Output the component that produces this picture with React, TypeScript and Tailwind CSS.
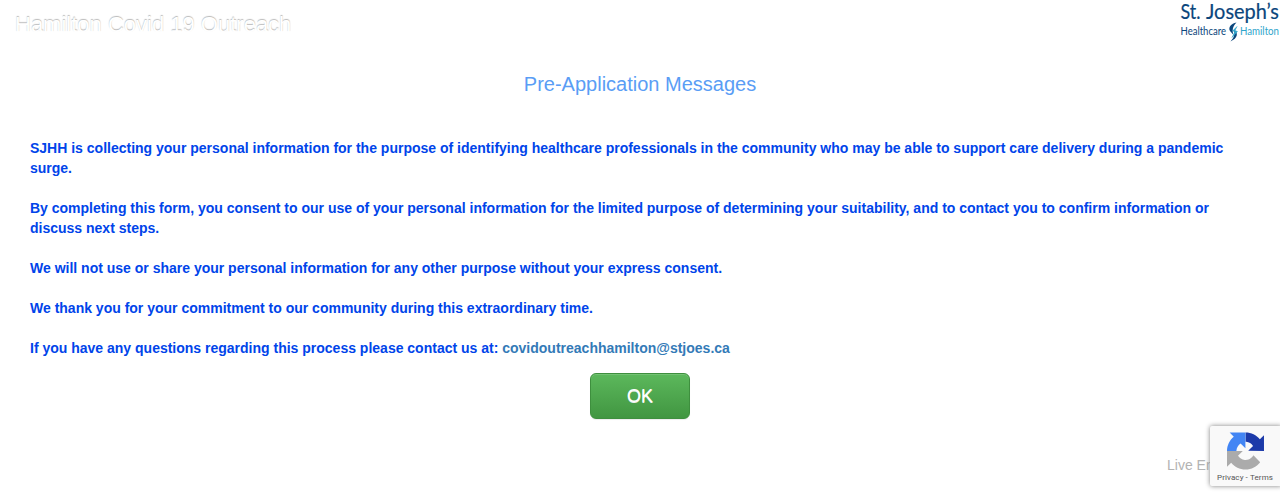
function HospitalLogo() {
  return (
    <svg width="100" height="44" viewBox="0 0 100 44" role="img" aria-label="St. Joseph's Healthcare Hamilton">
      <g fontFamily="Lato" strokeWidth="0.2">
        <text x="0.5" y="19" fontSize="22" textLength="20" lengthAdjust="spacingAndGlyphs" fill="#0b467c" stroke="#0b467c">
          St.
        </text>
        <text x="26" y="19" fontSize="22" textLength="73" lengthAdjust="spacingAndGlyphs" fill="#0b467c" stroke="#0b467c">
          Joseph’s
        </text>
        <text x="0.5" y="35" fontSize="11" textLength="45.5" lengthAdjust="spacingAndGlyphs" fill="#0b467c">
          Healthcare
        </text>
        <text x="60" y="35" fontSize="11" textLength="39" lengthAdjust="spacingAndGlyphs" fill="#2fa5cb">
          Hamilton
        </text>
      </g>
      <path d="M56.5 22.5C51 23.5 48 27.5 50 31L53.5 35C52 30.5 52.5 26.5 56.5 22.5Z" fill="#0b467c" />
      <path d="M54 29.5C58.5 33 58 38 50.5 41.5C54 37.5 55 35 54 29.5Z" fill="#0b467c" />
      <path d="M57 26.5L52.5 31L55 31.5L52 37.5L57.5 31.5L55 30.5Z" fill="#2fa5cb" stroke="#2fa5cb" strokeWidth="0.5" />
    </svg>
  );
}

function RecaptchaIcon() {
  return (
    <svg width="37" height="38" viewBox="0 0 64 64" aria-hidden="true">
      <path fill="#1c3aa9" d="M64 31.955l-.033-1.37V4.687l-7.16 7.16C50.948 4.674 42.033.093 32.05.093v15.9c.485 0 .86.057 1.135.163 4.976.393 9.288 3.14 11.828 7.124l-8.307 8.307L64 31.953" />
      <path fill="#4285f4" d="M31.862.094l-1.37.033H4.594l7.16 7.16C4.58 13.147 0 22.06 0 32.046h16.26c0-.485.057-.86.163-1.135.393-4.976 3.14-9.288 7.124-11.828l8.307 8.307L31.86.095" />
      <path fill="#ababab" d="M.001 32.045l.033 1.37v25.898l7.16-7.16c5.86 7.173 14.774 11.754 24.76 11.754 10.4 0 19.622-4.96 25.458-12.64l-11.736-11.86a15.55 15.55 0 0 1-4.754 5.334c-2.05 1.6-4.952 2.906-8.968 2.906-.485 0-.86-.057-1.135-.163-4.976-.393-9.288-3.14-11.828-7.124l8.307-8.307c-10.522.04-22.4.066-27.295-.005" />
    </svg>
  );
}

export default function App() {
  return (
    <div className="relative h-[500px] overflow-hidden bg-white font-['Liberation_Sans',Arial,sans-serif] text-sm leading-5">
      <header className="flex h-[50px] items-start justify-between pl-[15px]">
        <h1 className="pt-[9px] text-[22px] leading-8 text-white [text-shadow:0_-1px_1px_rgba(0,0,0,0.28)]">
          Hamilton Covid 19 Outreach
        </h1>
        <HospitalLogo />
      </header>
      <main className="px-[30px]">
        <h2 className="pt-[22px] text-center text-xl leading-6 text-[#5a9df5]">Pre-Application Messages</h2>
        <div className="space-y-5 pt-[42px] font-bold text-[#0044ea]">
          <p>
            SJHH is collecting your personal information for the purpose of identifying healthcare professionals in the
            community who may be able to support care delivery during a pandemic surge.
          </p>
          <p>
            By completing this form, you consent to our use of your personal information for the limited purpose of
            determining your suitability, and to contact you to confirm information or discuss next steps.
          </p>
          <p>We will not use or share your personal information for any other purpose without your express consent.</p>
          <p>We thank you for your commitment to our community during this extraordinary time.</p>
          <p>
            If you have any questions regarding this process please contact us at:{" "}
            <a href="mailto:covidoutreachhamilton@stjoes.ca" className="text-[#337ab7]">
              covidoutreachhamilton@stjoes.ca
            </a>
          </p>
        </div>
        <div className="flex justify-center pt-[15px]">
          <button
            type="button"
            className="h-[46px] w-[100px] rounded-md border border-[#3e8f3e] bg-linear-to-b from-[#5cb85c] to-[#419641] text-lg leading-6 text-white shadow-[inset_0_1px_0_rgba(255,255,255,0.15),0_1px_1px_rgba(0,0,0,0.075)] [text-shadow:0_1px_0_#eee]"
          >
            OK
          </button>
        </div>
      </main>
      <footer className="mt-9 flex justify-end pr-[15px] whitespace-nowrap text-[#b3b3b3]">
        <span className="w-[98px]">Live Environment</span>
      </footer>
      <aside className="absolute right-[-2px] bottom-[14px] flex h-[60px] w-[72px] flex-col items-center rounded-[2px] bg-[#f9f9f9] pt-[6px] pr-[2px] shadow-[0_0_5px_gray]">
        <RecaptchaIcon />
        <span className="mt-[3px] [font-family:Roboto,sans-serif] text-[8px] leading-[10px] tracking-[0.1px] whitespace-nowrap text-[#555]">
          Privacy&nbsp;-&nbsp;Terms
        </span>
      </aside>
    </div>
  );
}
